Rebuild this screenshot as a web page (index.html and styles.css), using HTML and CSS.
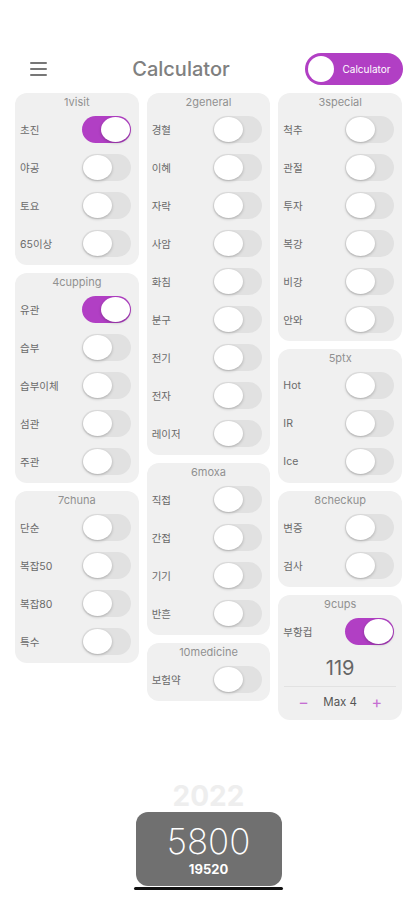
FILE: index.html
```html
<!DOCTYPE html>
<html lang="ko">
<head>
    <meta charset="UTF-8">
    <meta name="viewport" content="width=device-width, initial-scale=1.0">
    <title>Calculator</title>
    <link rel="stylesheet" href="styles.css">
</head>
<body>
    <div class="header">
        <div class="menu-btn">
            <span></span><span></span><span></span>
        </div>
        <h1>Calculator</h1>
        <div class="mode-toggle">
            <div class="mode-knob"></div>
            <span>Calculator</span>
        </div>
    </div>

    <div class="board">
        <div class="column">
            <div class="card">
                <div class="card-title">1visit</div>
                <div class="row"><span>초진</span><div class="switch on"></div></div>
                <div class="row"><span>야공</span><div class="switch"></div></div>
                <div class="row"><span>토요</span><div class="switch"></div></div>
                <div class="row"><span>65이상</span><div class="switch"></div></div>
            </div>
            <div class="card">
                <div class="card-title">4cupping</div>
                <div class="row"><span>유관</span><div class="switch on"></div></div>
                <div class="row"><span>습부</span><div class="switch"></div></div>
                <div class="row"><span>습부이체</span><div class="switch"></div></div>
                <div class="row"><span>섬관</span><div class="switch"></div></div>
                <div class="row"><span>주관</span><div class="switch"></div></div>
            </div>
            <div class="card">
                <div class="card-title">7chuna</div>
                <div class="row"><span>단순</span><div class="switch"></div></div>
                <div class="row"><span>복잡50</span><div class="switch"></div></div>
                <div class="row"><span>복잡80</span><div class="switch"></div></div>
                <div class="row"><span>특수</span><div class="switch"></div></div>
            </div>
        </div>

        <div class="column">
            <div class="card">
                <div class="card-title">2general</div>
                <div class="row"><span>경혈</span><div class="switch"></div></div>
                <div class="row"><span>이혜</span><div class="switch"></div></div>
                <div class="row"><span>자락</span><div class="switch"></div></div>
                <div class="row"><span>사암</span><div class="switch"></div></div>
                <div class="row"><span>화침</span><div class="switch"></div></div>
                <div class="row"><span>분구</span><div class="switch"></div></div>
                <div class="row"><span>전기</span><div class="switch"></div></div>
                <div class="row"><span>전자</span><div class="switch"></div></div>
                <div class="row"><span>레이저</span><div class="switch"></div></div>
            </div>
            <div class="card">
                <div class="card-title">6moxa</div>
                <div class="row"><span>직접</span><div class="switch"></div></div>
                <div class="row"><span>간접</span><div class="switch"></div></div>
                <div class="row"><span>기기</span><div class="switch"></div></div>
                <div class="row"><span>반흔</span><div class="switch"></div></div>
            </div>
            <div class="card">
                <div class="card-title">10medicine</div>
                <div class="row"><span>보험약</span><div class="switch"></div></div>
            </div>
        </div>

        <div class="column">
            <div class="card">
                <div class="card-title">3special</div>
                <div class="row"><span>척추</span><div class="switch"></div></div>
                <div class="row"><span>관절</span><div class="switch"></div></div>
                <div class="row"><span>투자</span><div class="switch"></div></div>
                <div class="row"><span>복강</span><div class="switch"></div></div>
                <div class="row"><span>비강</span><div class="switch"></div></div>
                <div class="row"><span>안와</span><div class="switch"></div></div>
            </div>
            <div class="card">
                <div class="card-title">5ptx</div>
                <div class="row"><span>Hot</span><div class="switch"></div></div>
                <div class="row"><span>IR</span><div class="switch"></div></div>
                <div class="row"><span>Ice</span><div class="switch"></div></div>
            </div>
            <div class="card">
                <div class="card-title">8checkup</div>
                <div class="row"><span>변증</span><div class="switch"></div></div>
                <div class="row"><span>검사</span><div class="switch"></div></div>
            </div>
            <div class="card cups">
                <div class="card-title">9cups</div>
                <div class="row"><span>부항컵</span><div class="switch on"></div></div>
                <div class="cups-count">119</div>
                <div class="stepper">
                    <span class="step">&minus;</span>
                    <span class="step-label">Max 4</span>
                    <span class="step">+</span>
                </div>
            </div>
        </div>
    </div>

    <div class="summary">
        <div class="year">2022</div>
        <div class="total-box">
            <div class="total">5800</div>
            <div class="sub-total">19520</div>
        </div>
        <div class="home-bar"></div>
    </div>
</body>
</html>
```

FILE: styles.css
```css
body {
    margin: 0;
    background-color: #ffffff;
    font-family: Inter, "Noto Sans", "Noto Sans CJK KR", sans-serif;
    color: #666;
}
.header {
    display: flex;
    align-items: center;
    justify-content: space-between;
    padding: 53px 14px 0 30px;
    height: 32px;
}
.menu-btn {
    display: flex;
    flex-direction: column;
    gap: 4px;
    width: 17px;
}
.menu-btn span {
    display: block;
    height: 2px;
    background-color: #777;
    border-radius: 1px;
}
h1 {
    margin: 0 0 0 10px;
    font-size: 20px;
    font-weight: 500;
    color: #808080;
}
.mode-toggle {
    display: flex;
    align-items: center;
    width: 98px;
    height: 32px;
    box-sizing: border-box;
    padding: 0 4px 0 3px;
    background-color: #b13fc4;
    border-radius: 16px;
}
.mode-knob {
    width: 26px;
    height: 26px;
    border-radius: 50%;
    background-color: white;
}
.mode-toggle span {
    flex: 1;
    text-align: center;
    color: white;
    font-size: 10px;
}
.board {
    display: grid;
    grid-template-columns: repeat(3, 1fr);
    gap: 8px;
    padding: 8px 15px 0 15px;
    align-items: start;
}
.column {
    display: flex;
    flex-direction: column;
    gap: 8px;
}
.card {
    background-color: #f0f0f0;
    border-radius: 12px;
    padding: 0 0 3px 0;
}
.card-title {
    height: 17px;
    line-height: 19px;
    text-align: center;
    font-size: 11px;
    color: #909090;
}
.row {
    display: flex;
    align-items: center;
    justify-content: space-between;
    height: 38px;
    padding: 0 8px 0 5px;
    font-size: 10.5px;
    color: #6a6a6a;
}
.switch {
    position: relative;
    width: 49px;
    height: 27px;
    border-radius: 14px;
    background-color: #e1e1e1;
}
.switch::after {
    content: "";
    position: absolute;
    top: 1px;
    left: 1px;
    width: 29px;
    height: 25px;
    border-radius: 50%;
    background-color: white;
    box-shadow: 0 1px 3px rgba(0, 0, 0, 0.25);
}
.switch.on {
    background-color: #b13fc4;
}
.switch.on::after {
    left: 19px;
}
.cups-count {
    text-align: center;
    font-size: 20px;
    color: #666;
    height: 36px;
    line-height: 36px;
}
.stepper {
    display: flex;
    align-items: center;
    justify-content: space-between;
    margin: 0 6px;
    padding: 0 14px;
    height: 30px;
    border-top: 1px solid #e2e2e2;
}
.step {
    color: #c56fd2;
    font-size: 16px;
}
.step-label {
    font-size: 11.5px;
    color: #555;
}
.summary {
    display: flex;
    flex-direction: column;
    align-items: center;
    margin-top: 60px;
}
.year {
    font-size: 28px;
    font-weight: 700;
    color: #eeeeee;
    line-height: 32px;
}
.total-box {
    width: 146px;
    height: 74px;
    box-sizing: border-box;
    padding-top: 10px;
    background-color: #707070;
    border-radius: 12px;
    text-align: center;
    color: white;
}
.total {
    font-size: 35px;
    font-weight: 200;
    line-height: 38px;
}
.sub-total {
    font-size: 13px;
    font-weight: 700;
    line-height: 18px;
}
.home-bar {
    width: 149px;
    height: 3px;
    margin-top: 1px;
    background-color: #111;
    border-radius: 2px;
}
```
